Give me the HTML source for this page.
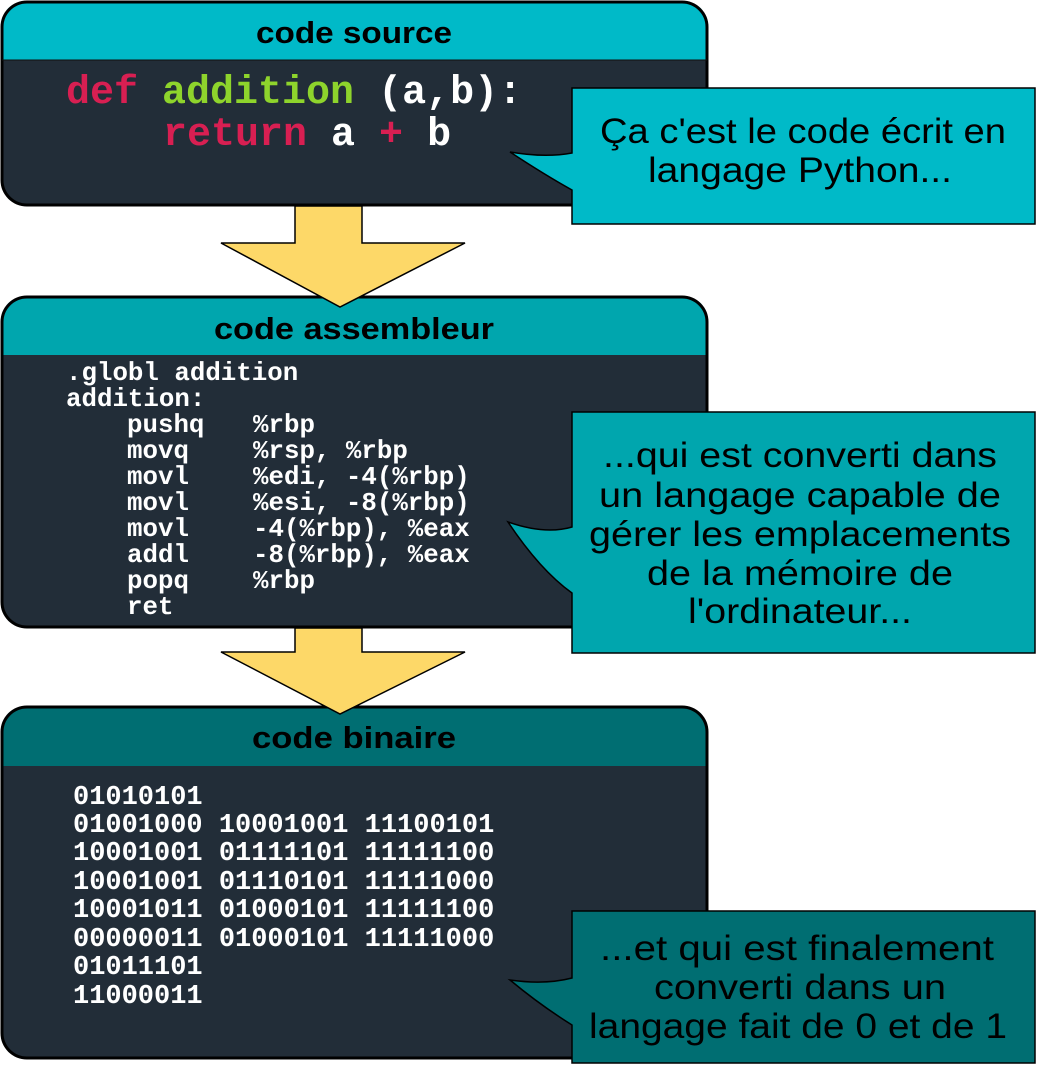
<!DOCTYPE html>
<html><head><meta charset="utf-8"><style>html,body{margin:0;padding:0;background:#fff}svg{display:block}</style></head>
<body>
<svg width="1037" height="1065" viewBox="0 0 1037 1065" xmlns="http://www.w3.org/2000/svg">
<!-- Box 1 -->
<path d="M27 2 H682 Q707 2 707 27 V60 H2 V27 Q2 2 27 2Z" fill="#00bac8"/>
<path d="M2 60 H707 V180 Q707 205 682 205 H27 Q2 205 2 180Z" fill="#222d38"/>
<rect x="2" y="2" width="705" height="203" rx="25" fill="none" stroke="#000" stroke-width="3"/>
<line x1="2" y1="60" x2="707" y2="60" stroke="#111" stroke-width="1"/>
<text x="354" y="43" text-anchor="middle" font-family="Liberation Sans, sans-serif" font-weight="bold" font-size="31" textLength="196" lengthAdjust="spacingAndGlyphs">code source</text>
<g font-family="Liberation Mono, monospace" font-weight="bold" font-size="40">
<text x="66" y="103"><tspan fill="#d81f52">def</tspan><tspan fill="#8ed42c"> addition</tspan><tspan fill="#fff"> (a,b):</tspan></text>
<text x="163" y="145"><tspan fill="#d81f52">return</tspan><tspan fill="#fff"> a </tspan><tspan fill="#d81f52">+</tspan><tspan fill="#fff"> b</tspan></text>
</g>
<!-- Box 2 -->
<path d="M27 297 H682 Q707 297 707 322 V355 H2 V322 Q2 297 27 297Z" fill="#00a6ae"/>
<path d="M2 355 H707 V602 Q707 627 682 627 H27 Q2 627 2 602Z" fill="#222d38"/>
<rect x="2" y="297" width="705" height="330" rx="25" fill="none" stroke="#000" stroke-width="3"/>
<text x="354" y="339" text-anchor="middle" font-family="Liberation Sans, sans-serif" font-weight="bold" font-size="31" textLength="280" lengthAdjust="spacingAndGlyphs">code assembleur</text>
<g font-family="Liberation Mono, monospace" font-weight="bold" font-size="25.8" fill="#fff">
<text x="66" y="380">.globl addition</text>
<text x="66" y="406">addition:</text>
<text x="127" y="432">pushq</text><text x="253" y="432">%rbp</text>
<text x="127" y="458">movq</text><text x="253" y="458">%rsp, %rbp</text>
<text x="127" y="484">movl</text><text x="253" y="484">%edi, -4(%rbp)</text>
<text x="127" y="510">movl</text><text x="253" y="510">%esi, -8(%rbp)</text>
<text x="127" y="536">movl</text><text x="253" y="536">-4(%rbp), %eax</text>
<text x="127" y="562">addl</text><text x="253" y="562">-8(%rbp), %eax</text>
<text x="127" y="588">popq</text><text x="253" y="588">%rbp</text>
<text x="127" y="614">ret</text>
</g>
<!-- Box 3 -->
<path d="M27 707 H682 Q707 707 707 732 V766 H2 V732 Q2 707 27 707Z" fill="#006e72"/>
<path d="M2 766 H707 V1033 Q707 1058 682 1058 H27 Q2 1058 2 1033Z" fill="#222d38"/>
<rect x="2" y="707" width="705" height="351" rx="25" fill="none" stroke="#000" stroke-width="3"/>
<text x="354" y="748" text-anchor="middle" font-family="Liberation Sans, sans-serif" font-weight="bold" font-size="31" textLength="204" lengthAdjust="spacingAndGlyphs">code binaire</text>
<g font-family="Liberation Mono, monospace" font-weight="bold" font-size="27" fill="#fff">
<text x="73" y="804">01010101</text>
<text x="73" y="832">01001000 10001001 11100101</text>
<text x="73" y="860">10001001 01111101 11111100</text>
<text x="73" y="889">10001001 01110101 11111000</text>
<text x="73" y="917">10001011 01000101 11111100</text>
<text x="73" y="946">00000011 01000101 11111000</text>
<text x="73" y="974">01011101</text>
<text x="73" y="1003">11000011</text>
</g>
<!-- Arrows -->
<path d="M295 206 H362 V243 H465 L340 307 L221 243 H295Z" fill="#fdd868" stroke="#000" stroke-width="1.5"/>
<path d="M295 628 H362 V652 H465 L340 714 L221 652 H295Z" fill="#fdd868" stroke="#000" stroke-width="1.5"/>
<!-- Callouts -->
<g stroke="#000" stroke-width="1.5" font-family="Liberation Sans, sans-serif" font-size="35" text-anchor="middle">
<path d="M572 88 H1035 V224 H572 V190 Q545 175 510 152 Q545 158 572 153Z" fill="#00bac8"/>
<g stroke="none" fill="#000">
<text x="803" y="143" textLength="406" lengthAdjust="spacingAndGlyphs">Ça c'est le code écrit en</text>
<text x="800" y="182" textLength="304" lengthAdjust="spacingAndGlyphs">langage Python...</text>
</g>
<path d="M572 412 H1035 V653 H572 V593 Q540 570 508 522 Q545 535 572 527Z" fill="#00a6ae"/>
<g stroke="none" fill="#000">
<text x="800" y="467" textLength="394" lengthAdjust="spacingAndGlyphs">...qui est converti dans</text>
<text x="800" y="507" textLength="402" lengthAdjust="spacingAndGlyphs">un langage capable de</text>
<text x="800" y="546" textLength="422" lengthAdjust="spacingAndGlyphs">gérer les emplacements</text>
<text x="800" y="585" textLength="306" lengthAdjust="spacingAndGlyphs">de la mémoire de</text>
<text x="800" y="623" textLength="224" lengthAdjust="spacingAndGlyphs">l'ordinateur...</text>
</g>
<path d="M572 911 H1035 V1063 H572 V1025 Q540 1005 510 980 Q545 985 572 978Z" fill="#006e72"/>
<g stroke="none" fill="#000">
<text x="797" y="960" textLength="394" lengthAdjust="spacingAndGlyphs">...et qui est finalement</text>
<text x="800" y="999" textLength="292" lengthAdjust="spacingAndGlyphs">converti dans un</text>
<text x="798" y="1038" textLength="418" lengthAdjust="spacingAndGlyphs">langage fait de 0 et de 1</text>
</g>
</g>
</svg>
</body></html>
